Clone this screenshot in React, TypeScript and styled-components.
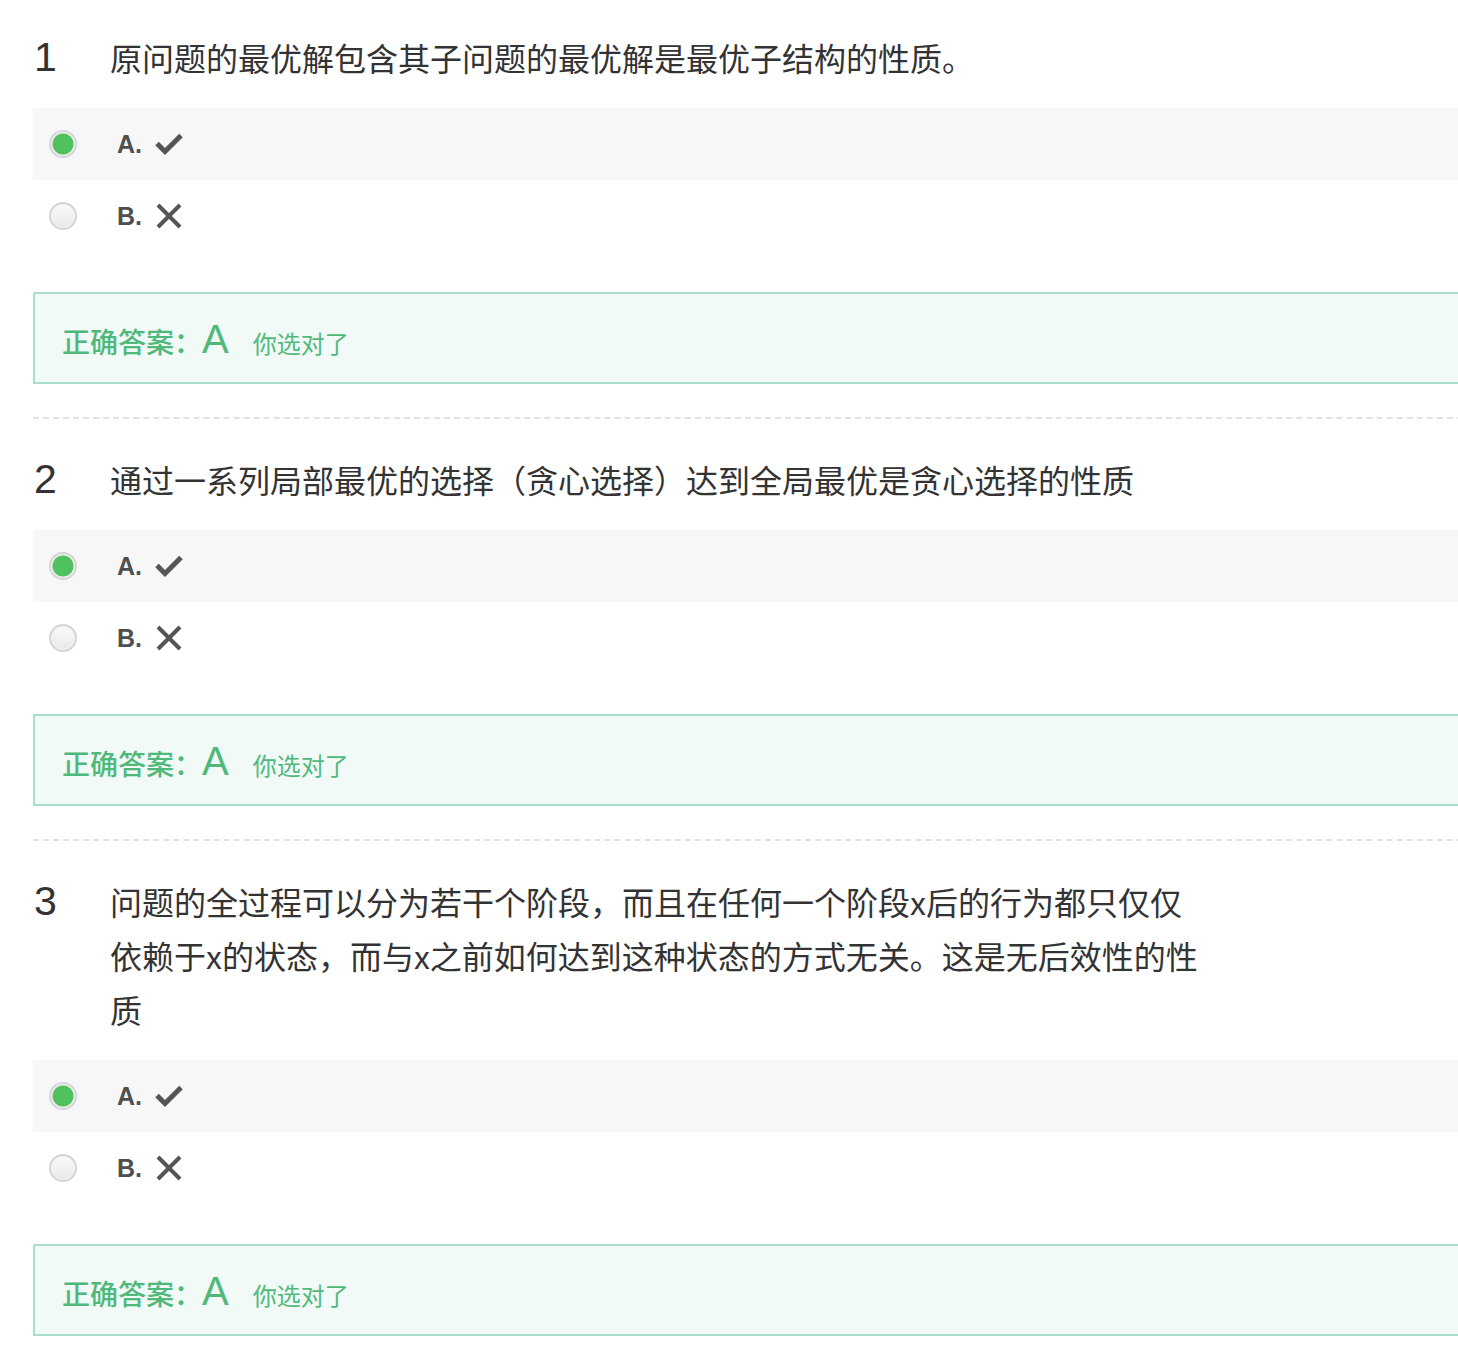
import styled, { createGlobalStyle } from "styled-components";

const GlobalStyle = createGlobalStyle`
  html, body {
    margin: 0;
    padding: 0;
    background: #fff;
    overflow: hidden;
  }
  body {
    font-family: "Liberation Sans", "Noto Sans CJK SC", sans-serif;
    color: #333;
  }
`;

type Question = {
  no: number;
  text: string;
  answer: string;
};

const questions: Question[] = [
  { no: 1, text: "原问题的最优解包含其子问题的最优解是最优子结构的性质。", answer: "A" },
  { no: 2, text: "通过一系列局部最优的选择（贪心选择）达到全局最优是贪心选择的性质", answer: "A" },
  {
    no: 3,
    text: "问题的全过程可以分为若干个阶段，而且在任何一个阶段x后的行为都只仅仅依赖于x的状态，而与x之前如何达到这种状态的方式无关。这是无后效性的性质",
    answer: "A",
  },
];

export default function App() {
  return (
    <>
      <GlobalStyle />
      <Page>
        {questions.map((q) => (
          <Item key={q.no}>
            <Title>
              <Number>{q.no}</Number>
              <TitleText>{q.text}</TitleText>
            </Title>
            <Options>
              <Option $shaded>
                <Radio $checked />
                <Letter>A.</Letter>
                <CheckIcon />
              </Option>
              <Option>
                <Radio />
                <Letter>B.</Letter>
                <CrossIcon />
              </Option>
            </Options>
            <AnswerBox>
              <AnswerLine>
                <AnswerLabel>正确答案：</AnswerLabel>
                <AnswerKey>{q.answer}</AnswerKey>
                <AnswerNote>你选对了</AnswerNote>
              </AnswerLine>
            </AnswerBox>
          </Item>
        ))}
      </Page>
    </>
  );
}

function CheckIcon() {
  return (
    <Icon width="28" height="22" viewBox="0 0 28 22">
      <polyline points="2,10.5 10,18.5 26,2.5" fill="none" stroke="#555" strokeWidth="5" />
    </Icon>
  );
}

function CrossIcon() {
  return (
    <Icon width="28" height="28" viewBox="0 0 28 28">
      <path d="M3 3 L25 25 M25 3 L3 25" fill="none" stroke="#555" strokeWidth="4" />
    </Icon>
  );
}

const Page = styled.div`
  padding-left: 33px;
  width: 1500px;
`;

const Item = styled.section`
  padding: 33px 0 33px;
  border-bottom: 2px dashed #e2e2e2;

  &:first-child {
    padding-top: 30px;
  }
  &:last-child {
    border-bottom: none;
  }
`;

const Title = styled.div`
  display: flex;
  align-items: baseline;
`;

const Number = styled.div`
  flex: 0 0 76px;
  font-family: "Liberation Sans", Arial, sans-serif;
  font-size: 41px;
  line-height: 54px;
  color: #333;
  padding-left: 1px;
`;

const TitleText = styled.div`
  max-width: 1100px;
  font-family: "Noto Sans CJK SC", "Liberation Sans", sans-serif;
  font-size: 32px;
  line-height: 54px;
  color: #333;
`;

const Options = styled.div`
  margin-top: 24px;
`;

const Option = styled.div<{ $shaded?: boolean }>`
  display: flex;
  align-items: center;
  height: 72px;
  padding-left: 16px;
  background: ${(p) => (p.$shaded ? "#f7f7f7" : "transparent")};
`;

const Radio = styled.span<{ $checked?: boolean }>`
  box-sizing: border-box;
  width: 28px;
  height: 28px;
  border-radius: 50%;
  border: 2px solid #d6d6d6;
  background: ${(p) =>
    p.$checked
      ? "radial-gradient(circle, #4fc25f 0, #4fc25f 10px, #e9e9e9 11px)"
      : "linear-gradient(#fbfbfb, #e8e8e8)"};
  box-shadow: inset 0 0 0 1px #f2f2f2;
`;

const Letter = styled.span`
  margin-left: 40px;
  font-family: "Liberation Sans", Arial, sans-serif;
  font-weight: bold;
  font-size: 25px;
  color: #4f4f4f;
`;

const Icon = styled.svg`
  margin-left: 13px;
  display: block;
`;

const AnswerBox = styled.div`
  margin-top: 40px;
  height: 88px;
  border: 2px solid #a9dec8;
  border-right: none;
  background: #f1faf6;
  padding-left: 27px;
  display: flex;
  align-items: center;
`;

const AnswerLine = styled.div`
  display: flex;
  align-items: baseline;
  color: #4fb97b;
  padding-top: 2px;
`;

const AnswerLabel = styled.span`
  font-family: "Noto Sans CJK SC", sans-serif;
  font-weight: 500;
  font-size: 28px;
  line-height: 1;
`;

const AnswerKey = styled.span`
  font-family: "Liberation Sans", Arial, sans-serif;
  font-size: 40px;
  line-height: 1;
`;

const AnswerNote = styled.span`
  margin-left: 24px;
  font-family: "Noto Sans CJK SC", sans-serif;
  font-size: 24px;
  line-height: 1;
`;
